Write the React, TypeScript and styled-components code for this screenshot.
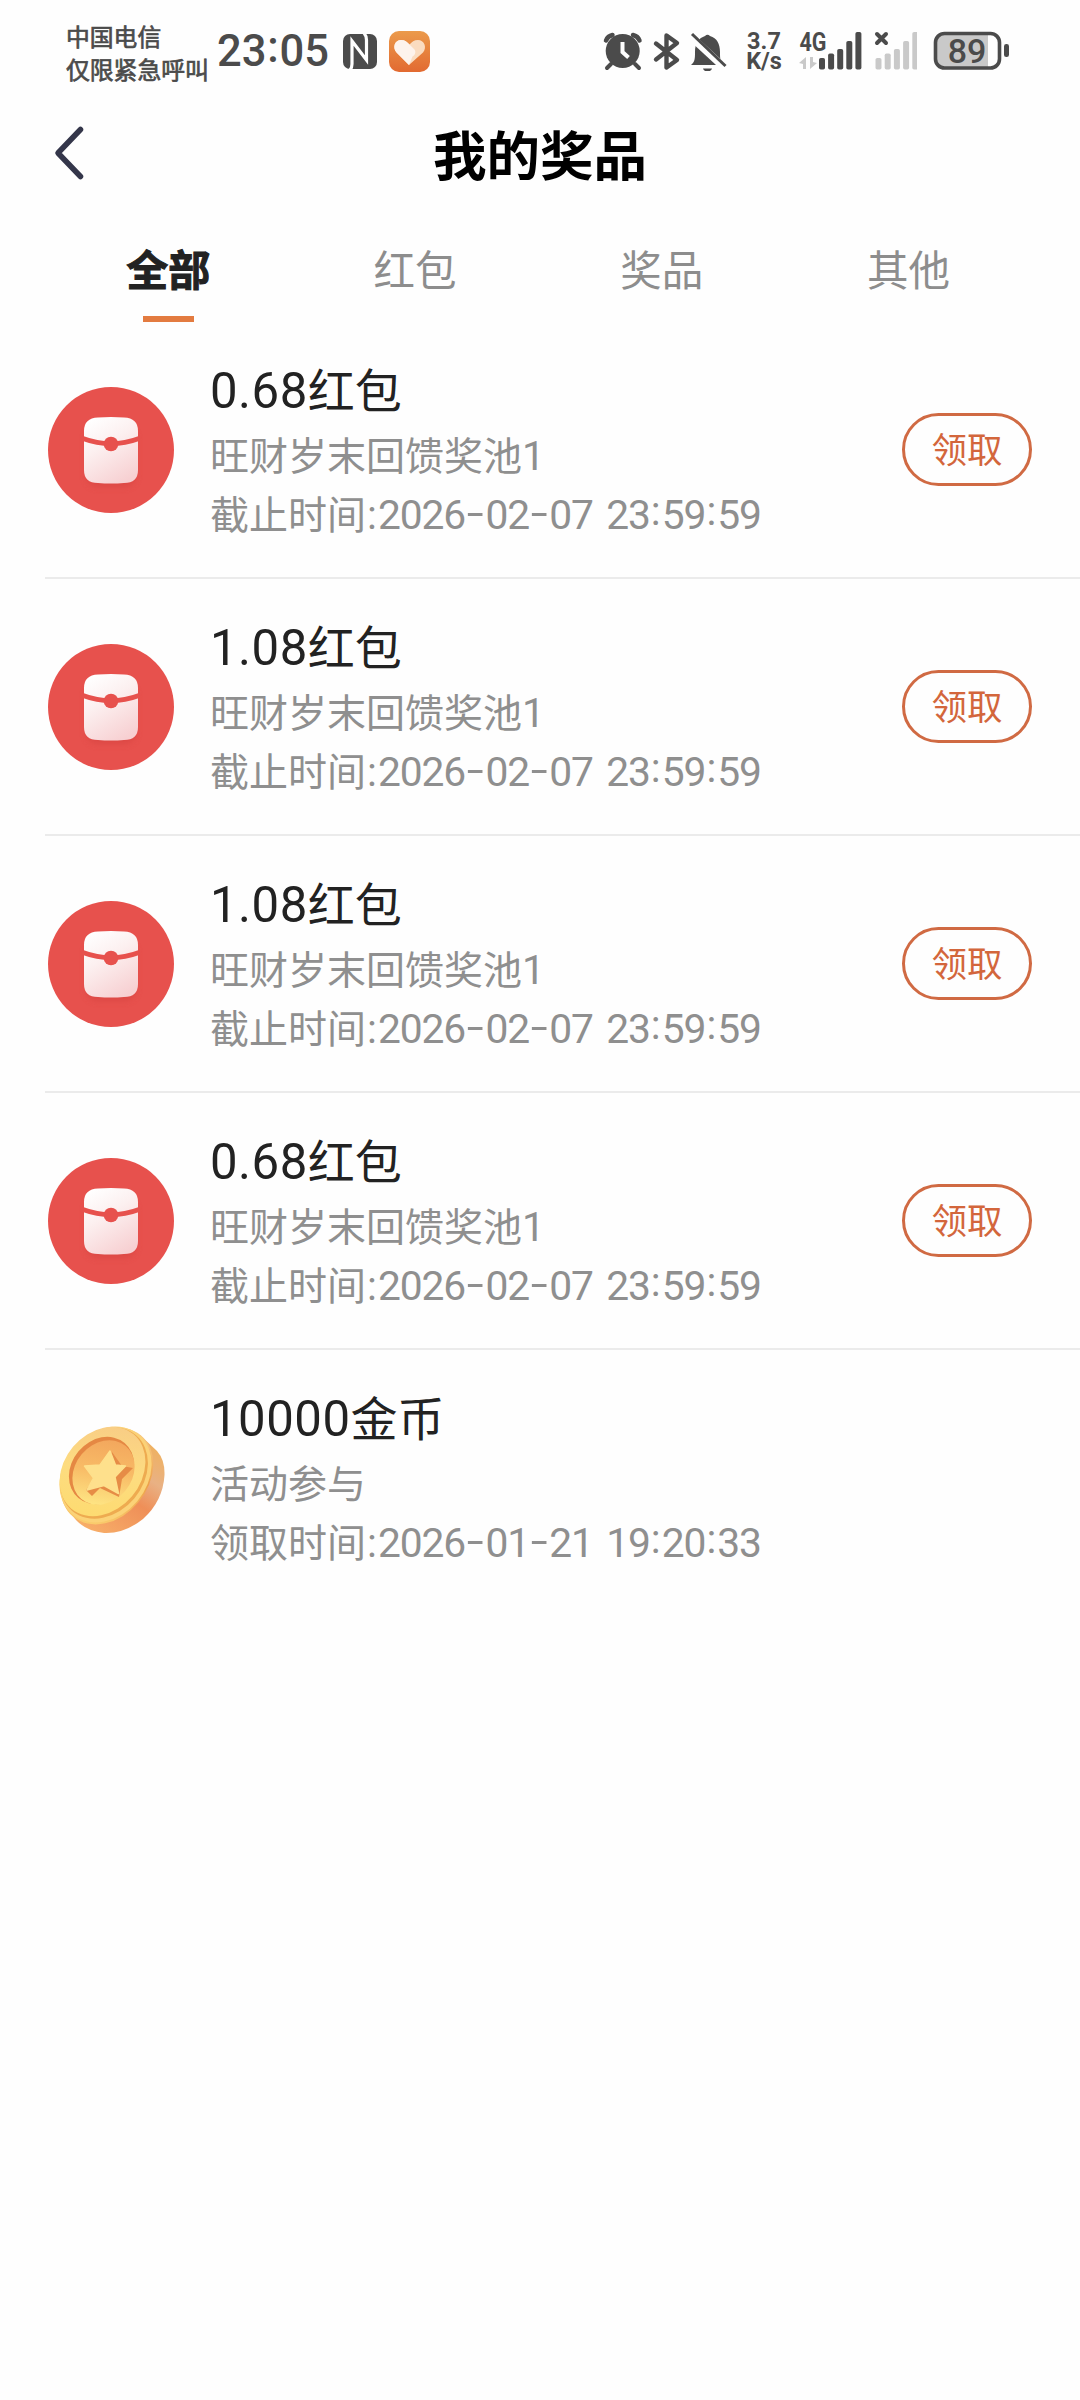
import React from 'react';
import styled, { createGlobalStyle } from 'styled-components';

const CJK = '"Noto Sans CJK SC", sans-serif';
const INK = '#4b4b4b';

const GlobalStyle = createGlobalStyle`
  * { box-sizing: border-box; }
  html, body { margin: 0; background: #fefefe; }
  body { font-family: Roboto, ${CJK}; }
  button { font: inherit; background: none; padding: 0; margin: 0; border: 0; }
`;

const Screen = styled.div`
  width: 1080px;
  min-height: 2400px;
  display: flex;
  flex-direction: column;
  background: #fefefe;
`;

const StatusBar = styled.header`
  height: 105px;
  padding: 0 71px 3px 66px;
  display: flex;
  align-items: center;
  justify-content: space-between;
  color: ${INK};
  svg { display: block; flex: none; }
`;

const StatusGroup = styled.div`
  display: flex;
  align-items: center;
`;

const Carrier = styled.div`
  width: 151px;
  padding-top: 2px;
  white-space: nowrap;
  font: 400 23.8px/33px ${CJK};
  -webkit-text-stroke: 0.7px ${INK};
`;

const Clock = styled.div`
  width: 126px;
  padding-top: 2px;
  font: 500 43.5px/50px Roboto, sans-serif;
`;

const Speed = styled.div`
  width: 55px;
  padding: 1px 11px 0 0;
  font: 700 23.5px/19.5px Roboto, sans-serif;
  display: flex;
  flex-direction: column;
  align-items: center;
`;

const Header = styled.div`
  height: 101px;
  padding-bottom: 5px;
  display: grid;
  grid-template-columns: 100px 1fr 100px;
  align-items: center;
`;

const BackButton = styled.button`
  padding-left: 52px;
  height: 58px;
  svg { display: block; }
`;

const Title = styled.h1`
  margin: 0;
  text-align: center;
  color: #000;
  font: 700 53.5px/80px ${CJK};
`;

const Tabs = styled.nav`
  height: 116px;
  padding: 31px 48px 0 45px;
  display: grid;
  grid-template-columns: repeat(4, 1fr);
`;

const Tab = styled.button<{ $active?: boolean }>`
  && {
    display: flex;
    flex-direction: column;
    align-items: center;
    justify-content: flex-start;
    gap: 18px;
    padding-top: ${(p) => (p.$active ? 0 : 1)}px;
    color: ${(p) => (p.$active ? '#222' : '#8d8d8d')};
    font: ${(p) => (p.$active ? 700 : 400)} ${(p) => (p.$active ? 42 : 41.5)}px/61px ${CJK};
    -webkit-text-stroke: ${(p) => (p.$active ? '1px #222' : '0')};
  }
`;

const Indicator = styled.span`
  width: 51px;
  height: 6px;
  background: #e37b40;
`;

const List = styled.main`
  padding-left: 45px;
`;

const Row = styled.article`
  height: 257px;
  padding: 0 48px 0 3px;
  display: flex;
  align-items: flex-start;
  border-bottom: 2px solid #ebebeb;
  &:last-child { border-bottom-color: transparent; }
`;

const IconCell = styled.div`
  width: 162px;
  padding-top: 65px;
  svg { display: block; }
`;

const Details = styled.div`
  flex: 1;
  padding-top: 30px;
  white-space: nowrap;
`;

const Name = styled.div`
  height: 72px;
  color: #222;
  font: 400 47px/71px ${CJK};
`;

const Line = styled.div`
  height: 59px;
  color: #8f8f8f;
  font: 400 39px/59px ${CJK};
`;

const Latin = styled.span<{ $spacing: number }>`
  font-family: Roboto, sans-serif;
  font-size: 1.045em;
  letter-spacing: ${(p) => p.$spacing}px;
  word-spacing: 4.5px;
`;

const Colon = styled.span<{ $width: number; $lift?: number }>`
  display: inline-block;
  width: ${(p) => p.$width}px;
  line-height: 1;
  text-align: center;
  letter-spacing: 0;
  transform: translateY(${(p) => -(p.$lift ?? 0)}px);
`;

const Hyphen = styled.span`
  display: inline-block;
  width: 20.4px;
  line-height: 1;
  text-align: center;
  letter-spacing: 0;
  transform: translateY(-2px) scaleX(1.5);
`;

const ClaimButton = styled.button`
  && {
    width: 130px;
    height: 73px;
    margin-top: 91px;
    border: 3px solid #d06a43;
    border-radius: 37px;
    color: #d3663c;
    font: 400 35.5px/64px ${CJK};
    padding-bottom: 3px;
  }
`;

const LATIN = /([0-9:.\- ]+)/;

function Mixed({ text, spacing }: { text: string; spacing: number }) {
  return (
    <>
      {text.split(LATIN).filter(Boolean).map((part, i) =>
        LATIN.test(part) ? (
          <Latin key={i} $spacing={spacing}>
            {part.split(/([:-])/).filter(Boolean).map((s, j) => {
              if (s === '-') return <Hyphen key={j}>-</Hyphen>;
              if (s === ':') return <Colon key={j} $width={12} $lift={j === 0 ? 0 : 4}>:</Colon>;
              return s;
            })}
          </Latin>
        ) : part
      )}
    </>
  );
}

const NfcIcon = () => (
  <svg width="46" height="41" viewBox="343 31 46 41">
    <rect x="343" y="34" width="34" height="35" rx="7" fill={INK} />
    <path d="M350 70Q352 68 352 64V41L366.500 60V40Q366.500 36 364 33" fill="none" stroke="#fefefe" strokeWidth="3.200" />
  </svg>
);

const HeartIcon = () => (
  <svg width="41" height="41" viewBox="0 0 41 41">
    <defs>
      <linearGradient id="heartBg" x1="0" y1="0" x2="0" y2="1">
        <stop stopColor="#eb9a4b" />
        <stop offset="1" stopColor="#e26a31" />
      </linearGradient>
    </defs>
    <rect width="41" height="41" rx="10" fill="url(#heartBg)" />
    <path d="M20 34L7.500 21.500C3 16 6 9 12 9c4 0 6 2 8.500 4.500C23 11 25 9 29 9c6 0 9.500 7 5 12.500z" fill="#fadcc0" />
    <path d="M20 34L7.500 21.500C3 16 6 9 12 9c4 0 6 2 8.500 4.500l5 5c2 3 0 6-2 7z" fill="#fdf3ec" />
  </svg>
);

const StatusIcons = () => (
  <svg width="140" height="40" viewBox="602 31 140 40">
    <g stroke={INK} strokeLinecap="round" fill="none">
      <circle cx="622.700" cy="51" r="17" fill={INK} stroke="none" />
      <path d="M606 40.500a9 9 0 0 1 6.500-5.500M639.500 40.500a9 9 0 0 0-6.500-5.500" strokeWidth="4.500" />
      <path d="M611 64l-4 4M635 64l4 4" strokeWidth="4" />
      <path d="M622.500 42v10l6 5.500" stroke="#fefefe" strokeWidth="4" strokeLinecap="butt" />
      <path d="M656 43.500L677 60 666.500 67.500V35.500L677 43 656 59.500" strokeWidth="4.400" strokeLinejoin="round" />
    </g>
    <path d="M691 65c4-3 4-7 4-13 0-9 4-14 10-16a3.500 3.500 0 0 1 5 0c7 2 10 8 10 16 0 6 0 10 4 13z" fill={INK} />
    <path d="M703 68.500h9c-1 4-8 4-9 0z" fill={INK} />
    <path d="M689 35l38 35" stroke="#fefefe" strokeWidth="7.500" />
    <path d="M692 34l33.500 32" stroke={INK} strokeWidth="3" />
  </svg>
);

const TOPS = [58, 53.5, 49, 41, 32];

const SignalIcons = () => (
  <svg width="120" height="52" viewBox="797 25 120 52">
    <text x="799.500" y="50.500" fontFamily="Roboto, sans-serif" fontWeight="700" fontSize="25" textLength="27" lengthAdjust="spacingAndGlyphs" fill={INK}>4G</text>
    <path d="M799 63l7-6v12h-3v-5zM817 63l-7 6V57h3v5z" fill="#c9c9c9" />
    {TOPS.map((t, i) => (
      <rect key={t} x={819 + i * 9.1} y={t} width="6" height={69.5 - t} rx="1.800" fill={INK} />
    ))}
    {TOPS.map((t, i) => (
      <rect key={t} x={875.5 + i * 9.2} y={t} width="6" height={69.5 - t} rx="1.800" fill="#c9c9c9" />
    ))}
    <path d="M877 34l9 9M886 34l-9 9" stroke={INK} strokeWidth="4" strokeLinecap="round" />
  </svg>
);

const BatteryIcon = () => (
  <svg width="92" height="40" viewBox="917 31 92 40">
    <path d="M944 34h44v34h-44a8 8 0 0 1-8-8V42a8 8 0 0 1 8-8z" fill="#c9c9c9" />
    <rect x="935.500" y="33.500" width="64" height="34.500" rx="9" fill="none" stroke={INK} strokeWidth="3.600" />
    <rect x="1004" y="44" width="5" height="13" rx="2.300" fill={INK} />
    <text x="967" y="62.500" textAnchor="middle" fontFamily="Roboto, sans-serif" fontWeight="500" fontSize="34" fill={INK}>89</text>
  </svg>
);

const PacketIcon = () => (
  <svg width="126" height="126" viewBox="0 0 126 126">
    <defs>
      <linearGradient id="packet" x1="0.200" y1="0" x2="0.700" y2="1">
        <stop stopColor="#ffffff" />
        <stop offset="0.400" stopColor="#fcf0f0" />
        <stop offset="1" stopColor="#f7d0d2" />
      </linearGradient>
      <filter id="packetShadow" x="-30%" y="-30%" width="160%" height="160%">
        <feGaussianBlur stdDeviation="3" />
      </filter>
    </defs>
    <circle cx="63" cy="63" r="63" fill="#e7514d" />
    <rect x="38" y="40" width="50" height="60" rx="12" fill="#d23f3e" opacity="0.500" filter="url(#packetShadow)" />
    <path d="M50 30.500Q63 29.500 76 30.500Q90 31 90 44V83Q90 96 76 96Q63 97 50 96Q36 96 36 83V44Q36 31 50 30.500z" fill="url(#packet)" />
    <path d="M35 51.500Q63 62 91 51.500" fill="none" stroke="#e7514d" strokeWidth="5" />
    <circle cx="63" cy="57" r="7.300" fill="#e7514d" />
  </svg>
);

const CoinIcon = () => (
  <svg width="126" height="126" viewBox="48 1414 126 126">
    <defs>
      <linearGradient id="edge" x1="0.900" y1="0.100" x2="0.300" y2="1">
        <stop stopColor="#efb15f" />
        <stop offset="0.300" stopColor="#e9b184" />
        <stop offset="0.550" stopColor="#ef8f58" />
        <stop offset="1" stopColor="#f7ad68" />
      </linearGradient>
      <linearGradient id="rim" x1="0.200" y1="0" x2="0.700" y2="1">
        <stop stopColor="#f8cb86" />
        <stop offset="0.500" stopColor="#fddc80" />
        <stop offset="1" stopColor="#fddb70" />
      </linearGradient>
      <linearGradient id="lip" x1="0.300" y1="0" x2="0.700" y2="1">
        <stop stopColor="#f8cf8c" />
        <stop offset="0.500" stopColor="#eda04a" />
        <stop offset="1" stopColor="#fbd070" />
      </linearGradient>
      <linearGradient id="well" x1="0.200" y1="0" x2="0.700" y2="1">
        <stop stopColor="#f2a45c" />
        <stop offset="0.500" stopColor="#f8bb66" />
        <stop offset="1" stopColor="#fee785" />
      </linearGradient>
    </defs>
    <path d="M140 1434L157 1450Q165 1459 164.500 1474Q163 1500 143 1518Q124 1533 104 1532Q86 1530 76 1519L66 1507z" fill="url(#edge)" />
    <ellipse cx="107" cy="1475" rx="41" ry="53" transform="rotate(40 107 1475)" fill="url(#lip)" />
    <ellipse cx="105.500" cy="1473.500" rx="41.500" ry="52" transform="rotate(40 105.500 1473.500)" fill="#fbd277" />
    <ellipse cx="104" cy="1472" rx="39.500" ry="49.500" transform="rotate(40 104 1472)" fill="#eeab50" />
    <ellipse cx="102.500" cy="1470.500" rx="38.500" ry="48.500" transform="rotate(40 102.500 1470.500)" fill="url(#rim)" />
    <ellipse cx="101.500" cy="1469.500" rx="30" ry="36" transform="rotate(40 101.500 1469.500)" fill="#e58843" />
    <ellipse cx="103.500" cy="1471.500" rx="28.500" ry="34.500" transform="rotate(40 103.500 1471.500)" fill="url(#well)" />
    <path d="M112 1451L122 1465 133 1467 122 1478 119 1496 100 1487 92 1495 86 1489z" fill="#e68c46" />
    <path d="M110 1450L115.500 1464 125.500 1465 115 1476 118.500 1492.500 104 1484.500 87 1489 93.500 1477 84.500 1465 100 1464z" fill="#fee08c" strokeLinejoin="round" stroke="#fee08c" strokeWidth="1.500" />
  </svg>
);

type Prize = { name: string; source: string; time: string; coin?: boolean };

const PRIZES: Prize[] = [
  { name: '0.68红包', source: '旺财岁末回馈奖池1', time: '截止时间:2026-02-07 23:59:59' },
  { name: '1.08红包', source: '旺财岁末回馈奖池1', time: '截止时间:2026-02-07 23:59:59' },
  { name: '1.08红包', source: '旺财岁末回馈奖池1', time: '截止时间:2026-02-07 23:59:59' },
  { name: '0.68红包', source: '旺财岁末回馈奖池1', time: '截止时间:2026-02-07 23:59:59' },
  { name: '10000金币', source: '活动参与', time: '领取时间:2026-01-21 19:20:33', coin: true },
];

const TABS = ['全部', '红包', '奖品', '其他'];

export default function App() {
  return (
    <Screen>
      <GlobalStyle />
      <StatusBar>
        <StatusGroup>
          <Carrier>中国电信<br />仅限紧急呼叫</Carrier>
          <Clock>23<Colon $width={13} $lift={4}>:</Colon>05</Clock>
          <NfcIcon />
          <HeartIcon />
        </StatusGroup>
        <StatusGroup>
          <StatusIcons />
          <Speed><span>3.7</span><span>K/s</span></Speed>
          <SignalIcons />
          <BatteryIcon />
        </StatusGroup>
      </StatusBar>
      <Header>
        <BackButton aria-label="返回">
          <svg width="34" height="56" viewBox="0 0 34 56">
            <path d="M28.500 4.500L6 28 28.500 51.500" fill="none" stroke="#34364a" strokeWidth="5.500" strokeLinecap="round" strokeLinejoin="round" />
          </svg>
        </BackButton>
        <Title>我的奖品</Title>
      </Header>
      <Tabs>
        {TABS.map((t, i) => (
          <Tab key={t} $active={i === 0}>
            {t}
            {i === 0 && <Indicator />}
          </Tab>
        ))}
      </Tabs>
      <List>
        {PRIZES.map((p, i) => (
          <Row key={i}>
            <IconCell>{p.coin ? <CoinIcon /> : <PacketIcon />}</IconCell>
            <Details>
              <Name><Mixed text={p.name} spacing={0.5} /></Name>
              <Line><Mixed text={p.source} spacing={-1} /></Line>
              <Line><Mixed text={p.time} spacing={-1.15} /></Line>
            </Details>
            {!p.coin && <ClaimButton>领取</ClaimButton>}
          </Row>
        ))}
      </List>
    </Screen>
  );
}
